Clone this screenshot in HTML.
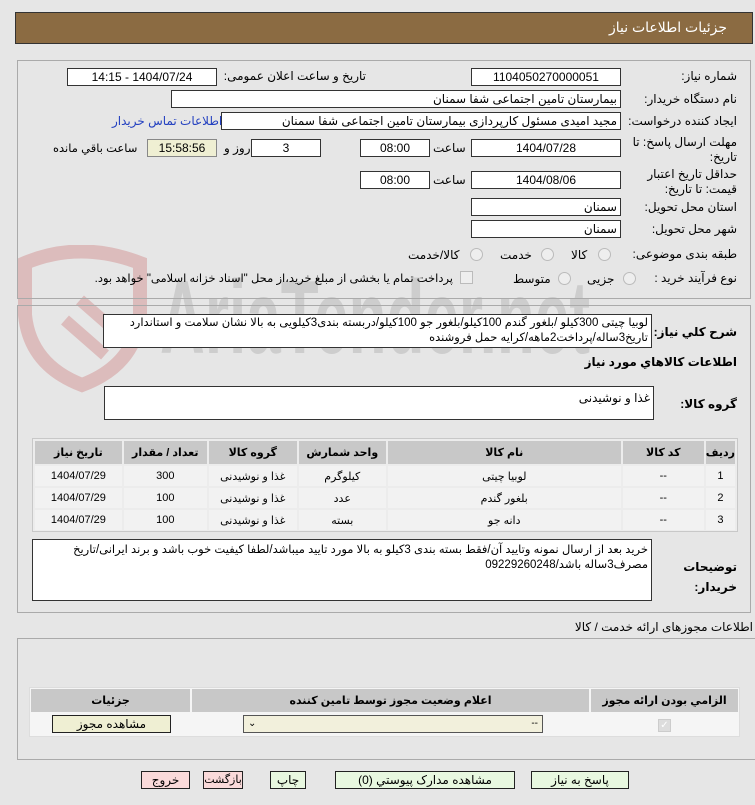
<!DOCTYPE html>
<html><head><meta charset="utf-8"><style>
*{box-sizing:border-box;margin:0;padding:0}
body{width:755px;height:805px;background:#e6e6e6;font-family:"Liberation Sans","DejaVu Sans",sans-serif;font-size:12px;color:#000;position:relative;overflow:hidden}
.a{position:absolute;white-space:nowrap}
.r{direction:rtl}
.in{position:absolute;background:#fff;border:1px solid #333;height:18px;line-height:16px;font-size:12px;direction:rtl;padding:0 3px;white-space:nowrap;overflow:hidden}
.c{text-align:center}
.pan{position:absolute;border:1px solid #aaa}
.lab{position:absolute;right:18px;direction:rtl;font-size:12px;white-space:nowrap}
.rad{position:absolute;width:13px;height:13px;border-radius:50%;border:1px solid #bbb;background:#eee}
table{border-collapse:separate;border-spacing:2px;position:absolute}
td,th{text-align:center;font-size:11px}
th{background:#c8c8c8;font-weight:bold;height:23px}
td{background:#f2f2f2;height:20px}
.btn{position:absolute;height:18px;border:1px solid #222;text-align:center;line-height:16px;font-size:12px;direction:rtl;white-space:nowrap;overflow:hidden}
.t{font-size:12px}
</style></head><body>
<div class="a" style="left:15px;top:12px;width:738px;height:32px;background:#8b6b42;border:1px solid #333"></div>
<div class="a r" style="right:28px;top:19px;color:#fff;font-size:14px">جزئیات اطلاعات نیاز</div>

<svg class="a" style="left:10px;top:245px" width="620" height="150"><path d="M15 18 Q70 -5 130 18 L130 70 Q125 120 72 140 Q20 120 15 70 Z" fill="none" stroke="#dcbcbc" stroke-width="14"/><path d="M55 75 L95 110 M70 55 L110 90" stroke="#dcbcbc" stroke-width="12"/><text x="150" y="108" font-size="104" font-family="Liberation Sans" font-weight="bold" fill="#c4c4c4" fill-opacity="0.75" textLength="430" lengthAdjust="spacingAndGlyphs">AriaTender.net</text></svg>

<div class="pan" style="left:17px;top:60px;width:734px;height:239px"></div>
<div class="lab" style="top:69px">شماره نیاز:</div>
<div class="in c" style="left:471px;top:68px;width:150px">1104050270000051</div>
<div class="a r t" style="right:389px;top:69px">تاریخ و ساعت اعلان عمومی:</div>
<div class="in c" style="left:67px;top:68px;width:150px">1404/07/24 - 14:15</div>

<div class="lab" style="top:92px">نام دستگاه خریدار:</div>
<div class="in" style="left:171px;top:90px;width:450px">بیمارستان تامین اجتماعی شفا سمنان</div>

<div class="lab" style="top:114px">ایجاد کننده درخواست:</div>
<div class="in" style="left:221px;top:112px;width:400px">مجید امیدی مسئول کارپردازی بیمارستان تامین اجتماعی شفا سمنان</div>
<div class="a r" style="left:112px;top:114px;color:#2340c0;font-size:12px">اطلاعات تماس خریدار</div>

<div class="lab" style="top:135px;line-height:15px;text-align:right">مهلت ارسال پاسخ: تا<br>تاریخ:</div>
<div class="in c" style="left:471px;top:139px;width:150px">1404/07/28</div>
<div class="a r t" style="left:433px;top:141px">ساعت</div>
<div class="in c" style="left:360px;top:139px;width:70px">08:00</div>
<div class="in c" style="left:251px;top:139px;width:70px">3</div>
<div class="a r t" style="left:224px;top:141px">روز و</div>
<div class="in c" style="left:147px;top:139px;width:70px;background:#efefd3;border-color:#888">15:58:56</div>
<div class="a r" style="left:53px;top:141px;font-size:11.5px">ساعت باقي مانده</div>

<div class="lab" style="top:167px;line-height:15px;text-align:right">حداقل تاریخ اعتبار<br>قیمت: تا تاریخ:</div>
<div class="in c" style="left:471px;top:171px;width:150px">1404/08/06</div>
<div class="a r t" style="left:433px;top:173px">ساعت</div>
<div class="in c" style="left:360px;top:171px;width:70px">08:00</div>

<div class="lab" style="top:200px">استان محل تحویل:</div>
<div class="in" style="left:471px;top:198px;width:150px">سمنان</div>
<div class="lab" style="top:222px">شهر محل تحویل:</div>
<div class="in" style="left:471px;top:220px;width:150px">سمنان</div>

<div class="lab" style="top:247px">طبقه بندی موضوعی:</div>
<div class="rad" style="left:598px;top:248px"></div><div class="a r t" style="left:571px;top:248px">کالا</div>
<div class="rad" style="left:541px;top:248px"></div><div class="a r t" style="left:500px;top:248px">خدمت</div>
<div class="rad" style="left:470px;top:248px"></div><div class="a r t" style="left:408px;top:248px">کالا/خدمت</div>

<div class="lab" style="top:271px">نوع فرآیند خرید :</div>
<div class="rad" style="left:623px;top:272px"></div><div class="a r t" style="left:587px;top:272px">جزیی</div>
<div class="rad" style="left:558px;top:272px"></div><div class="a r t" style="left:513px;top:272px">متوسط</div>
<div class="a" style="left:460px;top:271px;width:13px;height:13px;border:1px solid #bbb;background:#eee"></div>
<div class="a r" style="left:67px;top:271px;font-size:11.5px;width:386px;text-align:right">پرداخت تمام یا بخشی از مبلغ خرید،از محل "اسناد خزانه اسلامی" خواهد بود.</div>

<div class="pan" style="left:17px;top:305px;width:734px;height:308px"></div>
<div class="lab" style="top:325px;font-weight:bold">شرح کلي نیاز:</div>
<div class="in" style="left:103px;top:314px;width:549px;height:34px;line-height:15px;white-space:normal;padding-top:1px;font-size:11.5px">لوبیا چیتی 300کیلو /بلغور گندم 100کیلو/بلغور جو 100کیلو/دربسته بندی3کیلویی به بالا نشان سلامت و استاندارد تاریخ3ساله/پرداخت2ماهه/کرایه حمل فروشنده</div>
<div class="lab" style="top:355px;font-weight:bold">اطلاعات کالاهاي مورد نیاز</div>
<div class="lab" style="top:397px;font-weight:bold">گروه کالا:</div>
<div class="in" style="left:104px;top:386px;width:550px;height:34px;padding-top:3px">غذا و نوشیدنی</div>

<div class="a" style="left:32px;top:438px;width:706px;height:94px;border:1px solid #c8c8c8;background:#ececec"></div>
<table class="r" style="left:33px;top:439px;width:704px">
<tr><th style="width:28px">ردیف</th><th style="width:81px">کد کالا</th><th style="width:233px">نام کالا</th><th style="width:87px">واحد شمارش</th><th style="width:88px">گروه کالا</th><th style="width:83px">تعداد / مقدار</th><th>تاریخ نیاز</th></tr>
<tr><td>1</td><td>--</td><td>لوبیا چیتی</td><td>کیلوگرم</td><td>غذا و نوشیدنی</td><td>300</td><td>1404/07/29</td></tr>
<tr><td>2</td><td>--</td><td>بلغور گندم</td><td>عدد</td><td>غذا و نوشیدنی</td><td>100</td><td>1404/07/29</td></tr>
<tr><td>3</td><td>--</td><td>دانه جو</td><td>بسته</td><td>غذا و نوشیدنی</td><td>100</td><td>1404/07/29</td></tr>
</table>

<div class="lab" style="top:557px;font-weight:bold;line-height:20px">توضیحات<br>خریدار:</div>
<div class="in" style="left:32px;top:539px;width:620px;height:62px;line-height:15px;white-space:normal;padding-top:3px;font-size:11.5px">خرید بعد از ارسال نمونه وتایید آن/فقط بسته بندی 3کیلو به بالا مورد تایید میباشد/لطفا کیفیت خوب باشد و برند ایرانی/تاریخ مصرف3ساله باشد/09229260248</div>

<div class="a r" style="right:2px;top:620px;font-size:12px">اطلاعات مجوزهای ارائه خدمت / کالا</div>
<div class="pan" style="left:17px;top:638px;width:740px;height:122px"></div>
<div class="a" style="left:29px;top:687px;width:711px;height:50px;background:#f5f5f5;border:1px solid #ddd"></div>
<table class="r" style="left:29px;top:687px;width:711px">
<tr><th style="width:147px;background:#c8c8c8">الزامي بودن ارائه مجوز</th><th style="width:397px">اعلام وضعیت مجوز توسط تامین کننده</th><th>جزئیات</th></tr>
<tr><td style="background:#f5f5f5;height:22px"><span style="display:inline-block;width:13px;height:13px;border:1px solid #ccc;background:#ddd;color:#fff;font-size:10px;line-height:11px">✓</span></td><td style="background:#f5f5f5"></td><td style="background:#f5f5f5"></td></tr>
</table>
<div class="a" style="left:243px;top:715px;width:300px;height:18px;background:#f2f0dc;border:1px solid #555;font-size:10px;line-height:16px;padding:0 4px">⌄<span style="float:right">--</span></div>
<div class="btn" style="left:52px;top:715px;width:119px;background:#efefd3">مشاهده مجوز</div>

<div class="btn" style="left:531px;top:771px;width:98px;background:#e8f8e0">پاسخ به نیاز</div>
<div class="btn" style="left:335px;top:771px;width:180px;background:#e8f8e0">مشاهده مدارک پیوستي (0)</div>
<div class="btn" style="left:270px;top:771px;width:36px;background:#e8f8e0">چاپ</div>
<div class="btn" style="left:203px;top:771px;width:40px;background:#fadada;font-size:11px">بازگشت</div>
<div class="btn" style="left:141px;top:771px;width:49px;background:#fadada">خروج</div>
</body></html>
